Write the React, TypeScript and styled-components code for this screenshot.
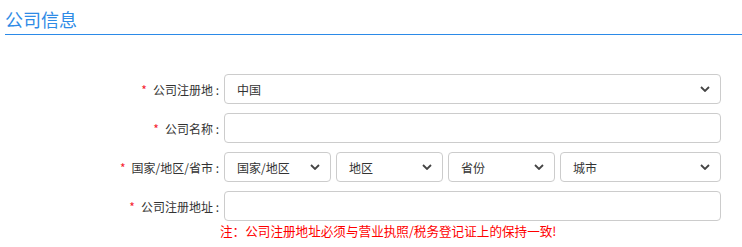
import React from 'react';
import styled, { createGlobalStyle } from 'styled-components';

const GlobalStyle = createGlobalStyle`
  body {
    margin: 0;
    background: #fff;
    font-family: "Noto Sans CJK SC", "Liberation Sans", sans-serif;
  }
`;

const Page = styled.div`
  width: 742px;
`;

const Title = styled.h2`
  margin: 0 0 0 5px;
  padding: 6px 0 2px;
  font-size: 18px;
  line-height: 26px;
  font-weight: normal;
  color: #2f8be6;
  border-bottom: 1px solid #2b8ae8;
`;

const Form = styled.div`
  display: grid;
  grid-template-columns: 219px 497px;
  column-gap: 5px;
  row-gap: 9px;
  margin-top: 39px;
`;

const Label = styled.label`
  display: flex;
  align-items: center;
  justify-content: flex-end;
  height: 30px;
  font-size: 12px;
  color: #333;
  white-space: nowrap;
`;

const Star = styled.span`
  color: #f5222d;
  margin-right: 6px;
`;

const Field = styled.div`
  display: flex;
  gap: 5px;
`;

const Box = styled.div<{ $w?: number }>`
  box-sizing: border-box;
  height: 30px;
  border: 1px solid #ccc;
  border-radius: 4px;
  background: #fff;
  display: flex;
  align-items: center;
  justify-content: space-between;
  padding: 0 10px 0 12px;
  font-size: 12px;
  color: #333;
  flex: ${(p) => (p.$w ? `0 0 ${p.$w}px` : '1 1 auto')};
`;

const Note = styled.div`
  grid-column: 2;
  margin: -7px 0 0 -4px;
  font-size: 12.6px;
  line-height: 16px;
  color: #f00;
  white-space: nowrap;
`;

const Chevron = () => (
  <svg width="10" height="6" viewBox="0 0 10 6">
    <path d="M1 1 L5 5 L9 1" fill="none" stroke="#444" strokeWidth="1.8" />
  </svg>
);

const Select: React.FC<{ value: string; w?: number }> = ({ value, w }) => (
  <Box $w={w}>
    <span>{value}</span>
    <Chevron />
  </Box>
);

const Req: React.FC<{ text: string }> = ({ text }) => (
  <Label>
    <Star>*</Star>
    {text} :
  </Label>
);

export default function App() {
  return (
    <Page>
      <GlobalStyle />
      <Title>公司信息</Title>
      <Form>
        <Req text="公司注册地" />
        <Field>
          <Select value="中国" />
        </Field>

        <Req text="公司名称" />
        <Field>
          <Box />
        </Field>

        <Req text="国家/地区/省市" />
        <Field>
          <Select value="国家/地区" w={107} />
          <Select value="地区" w={107} />
          <Select value="省份" w={107} />
          <Select value="城市" />
        </Field>

        <Req text="公司注册地址" />
        <Field>
          <Box />
        </Field>

        <Note>注：公司注册地址必须与营业执照/税务登记证上的保持一致!</Note>
      </Form>
    </Page>
  );
}
